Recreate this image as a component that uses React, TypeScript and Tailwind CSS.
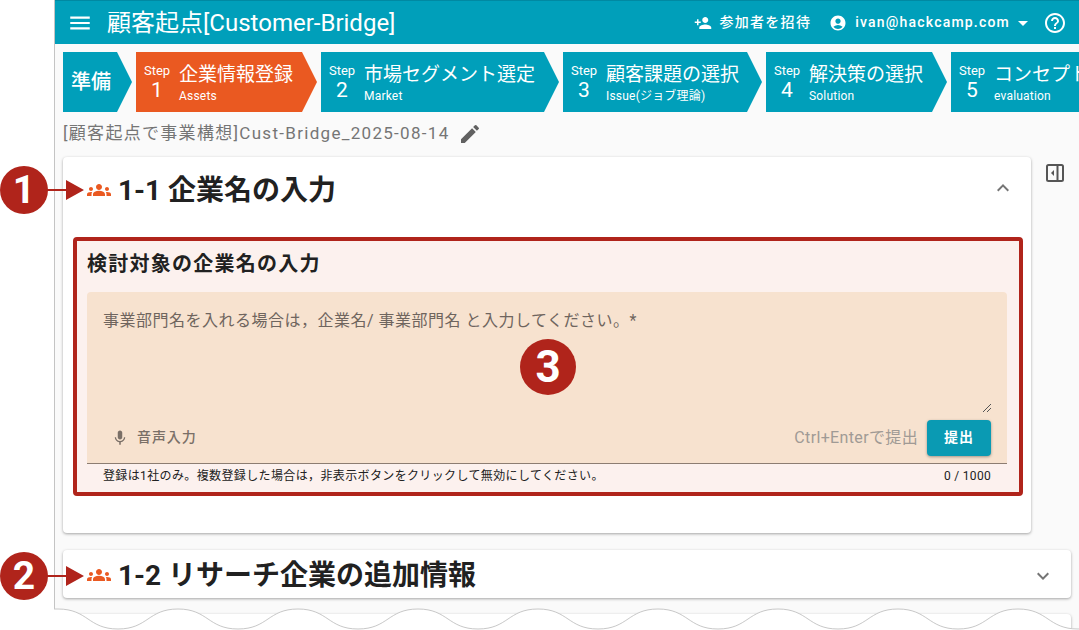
import {
  MdAccountCircle,
  MdArrowDropDown,
  MdEdit,
  MdExpandLess,
  MdExpandMore,
  MdGroups,
  MdHelpOutline,
  MdMenu,
  MdMic,
  MdPersonAdd,
} from "react-icons/md";

const FONT = "font-['Roboto','Noto_Sans_CJK_JP',sans-serif]";

interface StepData {
  num: number;
  title: string;
  sub: string;
  width: string;
  active?: boolean;
}

const STEPS: StepData[] = [
  { num: 1, title: "企業情報登録", sub: "Assets", width: "w-[181px]", active: true },
  { num: 2, title: "市場セグメント選定", sub: "Market", width: "w-[238px]" },
  { num: 3, title: "顧客課題の選択", sub: "Issue(ジョブ理論)", width: "w-[199px]" },
  { num: 4, title: "解決策の選択", sub: "Solution", width: "w-[181px]" },
  { num: 5, title: "コンセプト評価", sub: "evaluation", width: "w-[200px]" },
];

// wave edge of the cropped screenshot: one half period is 60px
function wavePath() {
  let d = "M54 3 L58 3";
  let x = 58;
  let down = true;
  while (x < 1079) {
    const y1 = down ? 3 : 23;
    const y2 = down ? 23 : 3;
    d += ` C${x + 30} ${y1} ${x + 30} ${y2} ${x + 60} ${y2}`;
    x += 60;
    down = !down;
  }
  return d;
}

function StepChip({ step }: { step: StepData }) {
  return (
    <div
      className={`${step.width} pl-[8px] h-[60px] shrink-0 flex items-center text-white [clip-path:polygon(0_0,calc(100%-15px)_0,100%_50%,calc(100%-15px)_100%,0_100%)] ${
        step.active ? "bg-[#ea5921]" : "bg-[#009fba]"
      }`}
    >
      <div className="w-[26px] flex flex-col items-center">
        <span className="text-[13px] leading-[15px] mt-[1px]">Step</span>
        <span className="text-[21px] leading-[24px]">{step.num}</span>
      </div>
      <div className="pl-[9px] flex flex-col whitespace-nowrap">
        <span className="text-[19px] leading-[27px]">{step.title}</span>
        <span className="text-[12px] leading-[16px] tracking-[0.2px]">{step.sub}</span>
      </div>
    </div>
  );
}

function Callout({ n, top }: { n: number; top: string }) {
  return (
    <div className={`absolute left-0 ${top} flex items-center`}>
      <div className="w-[48px] h-[48px] rounded-full bg-[#b0241b] text-white flex items-center justify-center text-[39px] font-bold font-['Roboto',sans-serif]">
        {n}
      </div>
      <svg width="38" height="24" viewBox="0 0 38 24" className="-ml-[2px]">
        <path d="M0 11h20v2H0z M20 2 38 12 20 22z" fill="#b0241b" />
      </svg>
    </div>
  );
}

function SectionTitle({ text }: { text: string }) {
  return (
    <div className="flex items-center">
      <MdGroups className="w-[24px] h-[24px] text-[#ea5921] ml-[24px] -mt-[2px]" />
      <span className="ml-[7px] text-[28px] font-bold text-[#212121] leading-[36px] whitespace-nowrap">{text}</span>
    </div>
  );
}

function PanelIcon() {
  return (
    <svg width="20" height="20" viewBox="0 0 20 20" fill="none" className="text-[#555555]">
      <rect x="2" y="2" width="16" height="16" rx="1.5" stroke="currentColor" strokeWidth="2" />
      <path d="M12.5 2.5v15" stroke="currentColor" strokeWidth="2" />
      <path d="M9 7v6l-3-3z" fill="currentColor" />
    </svg>
  );
}

export default function App() {
  return (
    <div className={`${FONT} relative w-[1079px] h-[630px] overflow-hidden bg-white`}>
      <div className="ml-[54px] h-full border-l border-[#c4c4c4] bg-[#fafafa]">
        <header className="h-[44px] bg-[#009fba] border-t border-[#0089a2] flex items-center text-white">
          <MdMenu className="w-[26px] h-[26px] ml-[12px]" />
          <span className="ml-[14px] text-[24px] leading-none whitespace-nowrap">顧客起点[Customer-Bridge]</span>
          <div className="ml-auto flex items-center text-[14px] font-medium">
            <MdPersonAdd className="w-[18px] h-[18px]" />
            <span className="ml-[7px] tracking-[1.3px]">参加者を招待</span>
            <MdAccountCircle className="w-[18px] h-[18px] ml-[18px]" />
            <span className="ml-[8px] tracking-[1.2px]">ivan@hackcamp.com</span>
            <MdArrowDropDown className="w-[24px] h-[24px] ml-[1px]" />
            <MdHelpOutline className="w-[24px] h-[24px] ml-[8px] mr-[12px]" />
          </div>
        </header>

        <div className="mt-[8px] pl-[8px] flex gap-[4px] overflow-hidden">
          <div className="w-[69px] h-[60px] shrink-0 bg-[#009fba] text-white flex items-center pl-[8px] text-[20px] font-medium [clip-path:polygon(0_0,calc(100%-15px)_0,100%_50%,calc(100%-15px)_100%,0_100%)]">
            準備
          </div>
          {STEPS.map((s) => (
            <StepChip key={s.num} step={s} />
          ))}
        </div>

        <div className="mt-[10px] pl-[8px] h-[24px] flex items-center text-[#757575]">
          <span className="text-[17px] tracking-[1.3px] whitespace-nowrap">[顧客起点で事業構想]Cust-Bridge_2025-08-14</span>
          <MdEdit className="w-[24px] h-[24px] ml-[8px] text-[#616161]" />
        </div>

        <div className="mt-[11px] pl-[8px] flex items-start">
          <section className="w-[968px] h-[376px] bg-white rounded-[4px] shadow-[0_1px_3px_rgba(0,0,0,0.35)]">
            <div className="h-[66px] flex items-center justify-between pt-[1px]">
              <SectionTitle text="1-1 企業名の入力" />
              <MdExpandLess className="w-[24px] h-[24px] text-[#757575] mr-[16px] -mt-[6px]" />
            </div>
            <div className="ml-[10px] mt-[14px] h-[259px] w-[950px] border-[4px] border-[#b0241b] rounded-[4px] bg-[#fcf1ee] pl-[10px] pr-[12px]">
              <h3 className="h-[51px] flex items-center text-[20px] font-bold tracking-[1.25px] text-[#212121] pb-[6px]">
                検討対象の企業名の入力
              </h3>
              <div className="h-[172px] bg-[#f7e2cf] rounded-t-[4px] border-b border-[#8c7d72] flex flex-col relative">
                <p className="pl-[16px] pt-[17px] text-[16px] text-[#6f655e] tracking-[0.5px] whitespace-nowrap">
                  事業部門名を入れる場合は，企業名/ 事業部門名 と入力してください。*
                </p>
                <div className="mt-auto h-[51px] flex items-center justify-between pl-[24px] pr-[16px]">
                  <div className="flex items-center text-[#7a6f67]">
                    <MdMic className="w-[18px] h-[18px]" />
                    <span className="ml-[8px] text-[14px] font-medium tracking-[0.9px]">音声入力</span>
                  </div>
                  <div className="flex items-center">
                    <span className="text-[16px] tracking-[0.35px] text-[#a09a95]">Ctrl+Enterで提出</span>
                    <button className="ml-[9px] w-[64px] h-[36px] rounded-[4px] bg-[#0a9ab3] text-white text-[14px] font-bold tracking-[1px] shadow-[0_1px_3px_rgba(0,0,0,0.35)]">
                      提出
                    </button>
                  </div>
                </div>
                <svg width="10" height="10" viewBox="0 0 10 10" className="absolute right-[15px] top-[111px]">
                  <path d="M1 9 9 1M5 9l4-4" stroke="#555" strokeWidth="1" />
                </svg>
              </div>
              <div className="flex items-center justify-between px-[16px] h-[24px] text-[#212121]">
                <span className="text-[12px] tracking-[0.37px] whitespace-nowrap">登録は1社のみ。複数登録した場合は，非表示ボタンをクリックして無効にしてください。</span>
                <span className="text-[12px] tracking-[0.3px]">0 / 1000</span>
              </div>
            </div>
          </section>
          <div className="ml-[14px] mt-[6px]">
            <PanelIcon />
          </div>
        </div>

        <section className="mt-[17px] ml-[8px] w-[1008px] h-[48px] pt-[3px] bg-white rounded-[4px] shadow-[0_1px_3px_rgba(0,0,0,0.35)] flex items-center justify-between">
          <SectionTitle text="1-2 リサーチ企業の追加情報" />
          <MdExpandMore className="w-[24px] h-[24px] text-[#757575] mr-[16px]" />
        </section>

        <section className="mt-[16px] ml-[8px] w-[1008px] h-[48px] bg-white rounded-[4px] shadow-[0_1px_3px_rgba(0,0,0,0.35)]" />
      </div>

      <Callout n={1} top="top-[166px]" />
      <Callout n={2} top="top-[552px]" />
      <div className="absolute left-[520px] top-[339px] w-[56px] h-[56px] rounded-full bg-[#b0241b] text-white flex items-center justify-center text-[44px] font-bold font-['Roboto',sans-serif]">
        3
      </div>

      <svg width="1079" height="24" viewBox="0 0 1079 24" className="absolute left-0 bottom-0">
        <path d={`${wavePath()} V24 H54 Z`} fill="#ffffff" />
        <path d={wavePath()} fill="none" stroke="#c8c8c8" strokeWidth="1" />
      </svg>
    </div>
  );
}
